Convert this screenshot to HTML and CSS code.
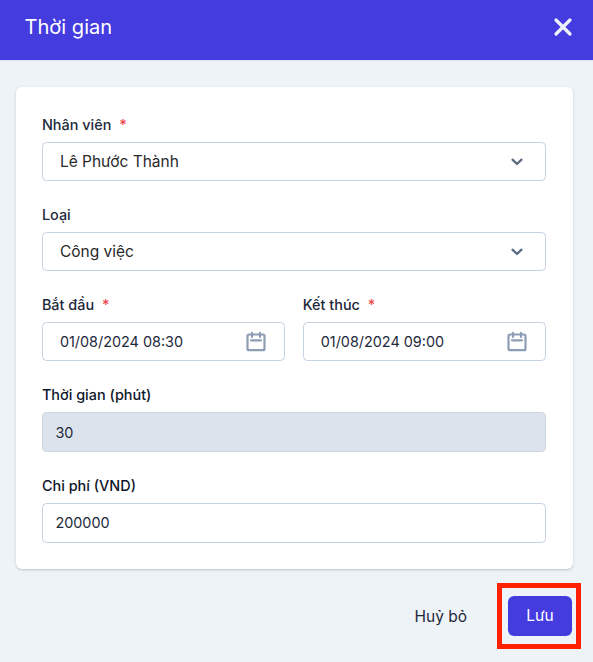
FILE: index.html
```html
<!DOCTYPE html>
<html lang="vi">
<head>
<meta charset="utf-8">
<title>Thời gian</title>
<link rel="stylesheet" href="styles.css">
</head>
<body>
<header class="header">
  <h1 class="title">Thời gian</h1>
  <svg class="close" viewBox="0 0 22 22"><path d="M4 4L18 18M18 4L4 18"/></svg>
</header>
<main class="card">
  <div class="field">
    <div class="label">Nhân viên <span class="required">*</span></div>
    <div class="control select"><span class="value">Lê Phước Thành</span><svg class="chevron" viewBox="0 0 14 10"><path d="M2.5 2.7L7 7L11.5 2.7"/></svg></div>
  </div>
  <div class="field">
    <div class="label">Loại</div>
    <div class="control select"><span class="value">Công việc</span><svg class="chevron" viewBox="0 0 14 10"><path d="M2.5 2.7L7 7L11.5 2.7"/></svg></div>
  </div>
  <div class="row">
    <div class="field">
      <div class="label">Bắt đầu <span class="required">*</span></div>
      <div class="control date"><span class="value">01/08/2024 08:30</span><svg class="calendar" viewBox="0 0 20 20"><rect x="1.5" y="2.5" width="17" height="15.7" rx="1.5"/><path d="M6 1V5M14 1V5"/><path d="M5 8.3H15"/></svg></div>
    </div>
    <div class="field">
      <div class="label">Kết thúc <span class="required">*</span></div>
      <div class="control date"><span class="value">01/08/2024 09:00</span><svg class="calendar" viewBox="0 0 20 20"><rect x="1.5" y="2.5" width="17" height="15.7" rx="1.5"/><path d="M6 1V5M14 1V5"/><path d="M5 8.3H15"/></svg></div>
    </div>
  </div>
  <div class="field field-tall">
    <div class="label label-dark">Thời gian (phút)</div>
    <div class="control input disabled"><span class="value">30</span></div>
  </div>
  <div class="field field-tall">
    <div class="label label-dark">Chi phí (VND)</div>
    <div class="control input"><span class="value">200000</span></div>
  </div>
</main>
<footer class="footer">
  <button class="cancel">Huỷ bỏ</button>
  <div class="highlight"><button class="save">Lưu</button></div>
</footer>
</body>
</html>
```
FILE: styles.css
```css
* { box-sizing: border-box; }
body {
  margin: 0;
  height: 662px;
  overflow: hidden;
  background: #eef3f8;
  font-family: Inter, "Liberation Sans", sans-serif;
  color: #1e293b;
}
svg { fill: none; stroke-linecap: round; stroke-linejoin: round; flex: none; }
.header {
  height: 60px;
  padding: 0 19px 6px 24.5px;
  display: flex;
  align-items: center;
  justify-content: space-between;
  background: #453cdf;
  box-shadow: 0 1px 0 #d9def5;
}
.title { margin: 0; font-size: 20.1px; line-height: 28px; font-weight: 400; color: #fff; }
.close { width: 22px; height: 22px; stroke: #eef3fb; stroke-width: 3.2; }
.card {
  width: 557px;
  height: 482px;
  margin: 27px 0 0 15.5px;
  padding: 28px 27px 0 26.4px;
  background: #fff;
  border-radius: 6px;
  box-shadow: 0 1px 3px rgba(30, 41, 59, .16), 0 1px 1px rgba(30, 41, 59, .08);
}
.field { height: 90px; flex: 1; }
.field-tall { height: 90.7px; }
.label { height: 27px; font-size: 14.45px; line-height: 20px; font-weight: 500; color: #1e293b; }
.label-dark { color: #0f172a; }
.required { margin-left: 4px; color: #ef4444; }
.control {
  height: 39px;
  display: flex;
  align-items: center;
  justify-content: space-between;
  border: 1px solid #c6d2e1;
  border-radius: 4.5px;
  background: #fff;
  font-size: 14.4px;
}
.select { padding: 0 21px 0 17px; font-size: 15.5px; color: #292929; }
.date { padding: 0 18px 0 17px; }
.input { height: 40px; padding: 0 12.5px; }
.disabled { background: #dde3ed; border-color: #cbd5e1; }
.row { display: flex; gap: 18px; }
.chevron { width: 14px; height: 10px; stroke: #5b6b82; stroke-width: 2.3; }
.calendar { width: 20px; height: 20px; stroke: #8d9db5; stroke-width: 2.2; }
.footer { display: flex; justify-content: flex-end; align-items: center; padding: 14px 12px 0 0; }
button { border: 0; padding: 1px 0 0; font: 400 15.5px/24px Inter, sans-serif; background: none; }
.cancel { margin-right: 30px; padding-top: 2px; color: #1e293b; }
.highlight {
  width: 84px;
  height: 66px;
  padding: 7.5px 4px 0 6px;
  border: 5px solid #ff2000;
}
.save { width: 64px; height: 40px; border-radius: 6px; background: #453cdf; color: #fff; }
```
